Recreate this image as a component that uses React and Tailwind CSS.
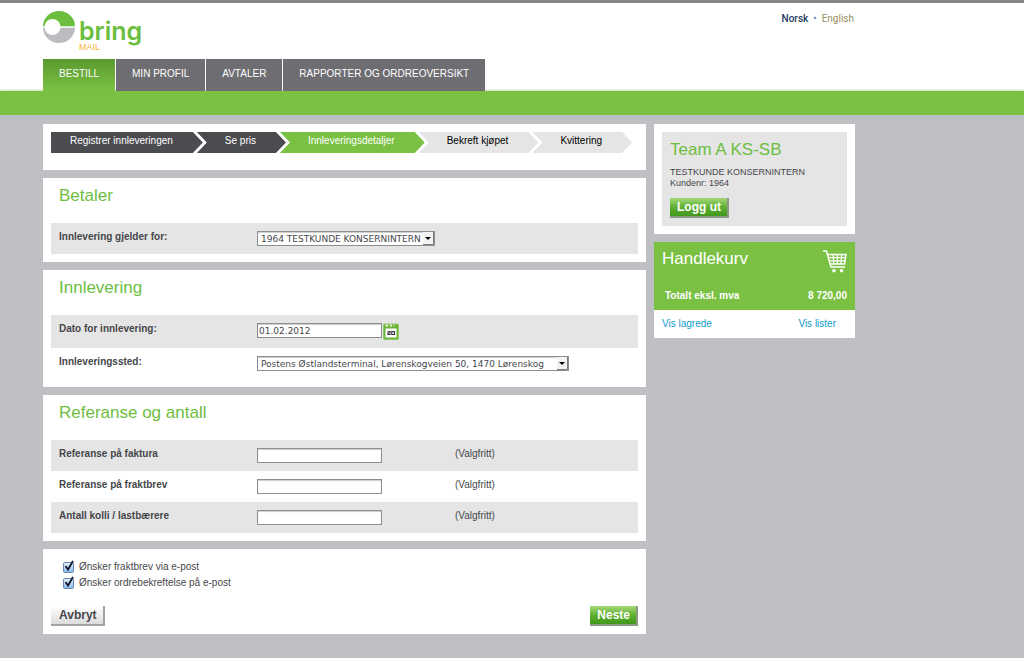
const tabs = ["BESTILL", "MIN PROFIL", "AVTALER", "RAPPORTER OG ORDREOVERSIKT"];

const steps = [
  { label: "Registrer innleveringen", state: "done" },
  { label: "Se pris", state: "done" },
  { label: "Innleveringsdetaljer", state: "current" },
  { label: "Bekreft kjøpet", state: "next" },
  { label: "Kvittering", state: "next" },
];

const stepColors = {
  done: "bg-[#4b4c50] text-white",
  current: "bg-[#7ac143] text-white",
  next: "bg-[#e5e5e5] text-black",
};

const Logo = () => {
  return (
    <a href="#" className="flex gap-1" aria-label="Bring Mail">
      <svg viewBox="0 0 32 32" className="w-8 h-8">
        <path d="M0 15.5A16 15.5 0 0 1 32 15.5Z" fill="#6cbe3f" />
        <path d="M0 16.5A16 15.5 0 0 0 32 16.5Z" fill="#bcbdc0" />
        <path d="M0 16H32" stroke="#fff" strokeWidth="1" />
        <circle cx="9.5" cy="16" r="8" fill="#fff" />
      </svg>
      <span className="flex flex-col pt-2">
        <span className="font-['Inter',sans-serif] font-semibold text-[25px] leading-6 text-[#6cbe3f]">bring</span>
        <span className="text-[9px] leading-[9px] text-[#f5b335]">MAIL</span>
      </span>
    </a>
  );
};

const Panel = ({ title, children }) => {
  return (
    <section className="bg-white p-2">
      {title && <h2 className="px-2 pb-[17px] text-[17px] leading-5 text-[#6cbe3f]">{title}</h2>}
      {children}
    </section>
  );
};

const Row = ({ id, label, shaded, children }) => {
  return (
    <div className={`flex px-2 py-2 ${shaded ? "bg-[#e5e5e5]" : ""}`}>
      <label htmlFor={id} className="w-[198px] shrink-0 font-bold leading-3">
        {label}
      </label>
      {children}
    </div>
  );
};

const TextInput = ({ id, defaultValue }) => {
  return (
    <input
      id={id}
      type="text"
      defaultValue={defaultValue}
      className="w-[125px] h-[15px] bg-white border border-[#8e8e8e] px-px font-['DejaVu_Sans',sans-serif] text-[9px] leading-3 shadow-[inset_0_1px_1px_#ccc]"
    />
  );
};

const Select = ({ id, option, width }) => {
  return (
    <div className={`relative flex h-[15px] ${width}`}>
      <select
        id={id}
        className="appearance-none w-full h-[15px] bg-white border border-[#8e8e8e] pl-[3px] font-['DejaVu_Sans',sans-serif] text-[9px] leading-3 shadow-[inset_0_1px_1px_#ccc]"
      >
        <option>{option}</option>
      </select>
      {/* Drop-down arrow */}
      <svg viewBox="0 0 12 13" className="absolute right-px top-px w-3 h-[13px] pointer-events-none">
        <rect x="1" width="11" height="13" fill="#f2f2f2" />
        <path d="M11.5 0V12.5H1" fill="none" stroke="#7c7c7c" />
        <path d="M3 5H9L6 8Z" fill="#000" />
      </svg>
    </div>
  );
};

const CalendarIcon = () => {
  return (
    <svg viewBox="0 0 16 17" className="w-4 h-[17px]">
      <rect x="0.5" y="1" width="15" height="15.5" rx="1" fill="#6cb43a" stroke="#8fc966" />
      <path d="M2 2.5H5M6.5 2.5H9M11 1.5V3M4 1V4M8 1V4" stroke="#e3f4d5" strokeWidth="1" />
      <rect x="2.5" y="5.5" width="11" height="9" fill="#fff" />
      <path d="M4.5 8.5H7V10H5V11.5H7.5M8.8 8.5H11.5V11.5H8.8Z" fill="none" stroke="#33343c" strokeWidth="1.2" />
    </svg>
  );
};

const CartIcon = () => {
  return (
    <svg viewBox="0 0 24 23" className="w-6 h-[23px]" fill="none" stroke="#fff" strokeWidth="1.5">
      <path d="M0 1H3.5L8 17H22" />
      <path d="M4.5 4.5H23L21.500 14H7.3" />
      <path d="M5.6 7.7H22.5M6.6 10.9H22M10 4.5L11 14M14.3 4.5V14M18.6 4.5L17.9 14" strokeWidth="1.2" />
      <circle cx="11" cy="20.8" r="1.8" fill="#fff" stroke="none" />
      <circle cx="18.5" cy="20.8" r="1.8" fill="#fff" stroke="none" />
    </svg>
  );
};

const GreenButton = ({ children }) => {
  return (
    <button
      type="button"
      className="h-5 pl-[7px] pr-1.5 font-bold text-[12px] leading-4 text-white bg-linear-to-b from-[#a5d977] via-[#5fb031] to-[#3f981b] border-r-2 border-b-2 border-[#8a9a86]"
    >
      {children}
    </button>
  );
};

const Check = ({ id, label }) => {
  return (
    <div className="flex items-center gap-[5px] h-4">
      <span className="relative flex">
        <input
          id={id}
          type="checkbox"
          defaultChecked
          className="peer appearance-none w-[11px] h-[11px] border border-[#6a86ae] rounded-xs bg-linear-to-b from-[#e3effb] to-[#8fbdee]"
        />
        <svg viewBox="0 0 12 12" className="hidden peer-checked:block absolute left-0 -top-0.5 w-3 h-3 pointer-events-none">
          <path d="M2.5 6L5 9.5L10 1" fill="none" stroke="#10182c" strokeWidth="1.8" />
        </svg>
      </span>
      <label htmlFor={id}>{label}</label>
    </div>
  );
};

const App = () => {
  return (
    <div className="min-h-screen bg-[#bebfc3] font-['Liberation_Sans',Arial,sans-serif] text-[10px] leading-3 text-[#46474b]">
      <header className="bg-white border-t-3 border-[#858585]">
        <div className="max-w-[855px] pl-[43px]">
          <div className="flex justify-between items-start pt-2 h-14">
            <Logo />
            <div className="flex items-center gap-[5px] pt-0.5 pr-px font-[Roboto,sans-serif]">
              <a href="#" className="font-medium text-[#1d3a66]">Norsk</a>
              <span className="text-[#5f83b5]">•</span>
              <a href="#" className="text-[#97905f]">English</a>
            </div>
          </div>
          <nav className="flex gap-px">
            {tabs.map((tab, i) => (
              <a
                key={tab}
                href="#"
                className={`h-8 px-4 pt-2 leading-[14px] text-[10px] text-white ${
                  i === 0 ? "bg-linear-to-b from-[#5b9a31] to-[#7ac143]" : "bg-[#6e6d72]"
                }`}
              >
                {tab}
              </a>
            ))}
          </nav>
        </div>
        <div className="h-6 bg-[#7ac143] shadow-[0_-1px_2px_#c9d5c0]" />
      </header>

      <div className="flex items-start gap-2 max-w-[855px] pl-[43px] pt-[9px] pb-6">
        <main className="flex-1 flex flex-col gap-2">
          <div className="bg-white px-2 pt-2 pb-[17px]">
            <ol className="flex">
              {steps.map((step, i) => (
                <li
                  key={step.label}
                  className={`h-[21px] pr-[30px] leading-[18px] whitespace-nowrap ${stepColors[step.state]} ${
                    i === 0
                      ? "pl-[19px] [clip-path:polygon(0_0,calc(100%_-_10px)_0,100%_50%,calc(100%_-_10px)_100%,0_100%)]"
                      : "pl-7 -ml-1.5 [clip-path:polygon(0_0,calc(100%_-_10px)_0,100%_50%,calc(100%_-_10px)_100%,0_100%,10px_50%)]"
                  }`}
                >
                  {step.label}
                </li>
              ))}
            </ol>
          </div>

          <Panel title="Betaler">
            <Row id="payer" label="Innlevering gjelder for:" shaded>
              <Select id="payer" option="1964 TESTKUNDE KONSERNINTERN" width="w-[178px]" />
            </Row>
          </Panel>

          <Panel title="Innlevering">
            <Row id="date" label="Dato for innlevering:" shaded>
              <div className="flex items-start gap-px">
                <TextInput id="date" defaultValue="01.02.2012" />
                <button type="button" aria-label="Velg dato">
                  <CalendarIcon />
                </button>
              </div>
            </Row>
            <Row id="place" label="Innleveringssted:">
              <Select
                id="place"
                option="Postens Østlandsterminal, Lørenskogveien 50, 1470 Lørenskog"
                width="w-[312px]"
              />
            </Row>
          </Panel>

          <Panel title="Referanse og antall">
            <Row id="invoice-ref" label="Referanse på faktura" shaded>
              <TextInput id="invoice-ref" />
              <span className="ml-[73px]">(Valgfritt)</span>
            </Row>
            <Row id="waybill-ref" label="Referanse på fraktbrev">
              <TextInput id="waybill-ref" />
              <span className="ml-[73px]">(Valgfritt)</span>
            </Row>
            <Row id="count" label="Antall kolli / lastbærere" shaded>
              <TextInput id="count" />
              <span className="ml-[73px]">(Valgfritt)</span>
            </Row>
          </Panel>

          <Panel>
            <div className="pl-3 pt-0.5">
              <Check id="mail-waybill" label="Ønsker fraktbrev via e-post" />
              <Check id="mail-confirm" label="Ønsker ordrebekreftelse på e-post" />
            </div>
            <div className="flex justify-between mt-[15px]">
              <button
                type="button"
                className="h-5 pl-2 pr-1.5 font-bold text-[12px] leading-4 bg-linear-to-b from-white to-[#dcdcdc] border-r-2 border-b-2 border-[#a3a3a3]"
              >
                Avbryt
              </button>
              <GreenButton>Neste</GreenButton>
            </div>
          </Panel>
        </main>

        <aside className="w-[201px] shrink-0 flex flex-col gap-2">
          <section className="bg-white p-2">
            <div className="bg-[#e5e5e5] p-2">
              <h2 className="text-[17px] leading-5 text-[#6cbe3f]">Team A KS-SB</h2>
              <p className="mt-[7px] mb-[9px] text-[9px] leading-[11px]">
                TESTKUNDE KONSERNINTERN
                <br />
                Kundenr: 1964
              </p>
              <GreenButton>Logg ut</GreenButton>
            </div>
          </section>

          <section className="bg-white">
            <div className="bg-[#7ac143] text-white p-2">
              <div className="flex justify-between">
                <h2 className="text-[17px] leading-[18px]">Handlekurv</h2>
                <CartIcon />
              </div>
              <div className="flex justify-between mt-[17px] pl-[3px] font-bold">
                <span>Totalt eksl. mva</span>
                <span>8 720,00</span>
              </div>
            </div>
            <div className="flex justify-between pl-2 pr-[19px] py-2 text-[#0d9ccb]">
              <a href="#">Vis lagrede</a>
              <a href="#">Vis lister</a>
            </div>
          </section>
        </aside>
      </div>
    </div>
  );
};

export default App;
